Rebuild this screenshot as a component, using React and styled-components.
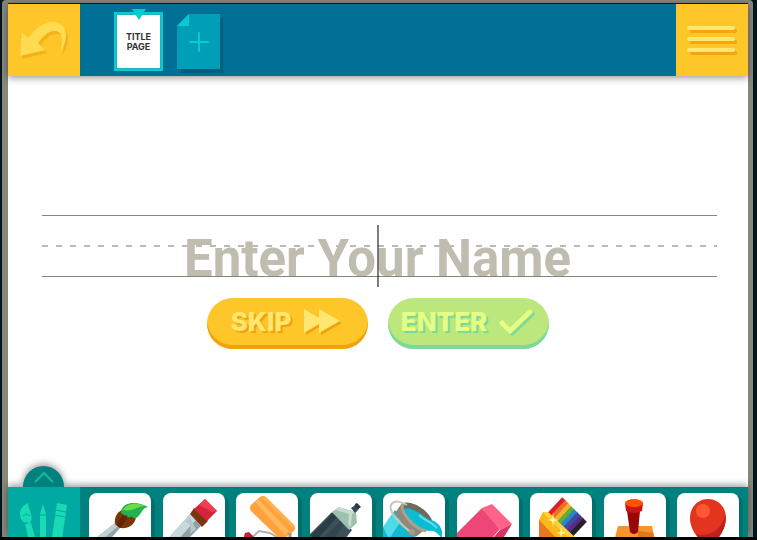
import React, { useState } from 'react'
import styled, { createGlobalStyle } from 'styled-components'

const GlobalStyle = createGlobalStyle`
  * { box-sizing: border-box; }
  body {
    margin: 0;
    background: #000;
    font-family: "Liberation Sans", sans-serif;
  }
  button { border: 0; padding: 0; cursor: pointer; font: inherit; }
  svg { display: block; }
`

const crayons = ['#dc1f26', '#ef6f24', '#f6b32a', '#5fae35', '#2a86c4', '#3d4ba3', '#5b2a86', '#242126']

const tools = [
  {
    name: 'Paint brush',
    art: (
      <>
        <path d="M2 49L26 30l5 5-13 15z" fill="#8fa6aa" />
        <path d="M2 49L26 30l3 3-19 17z" fill="#c0d0d3" />
        <path d="M26 31c-1-6 2-12 7-14l14 7c-1 8-8 12-16 11z" fill="#7b3509" />
        <path d="M27 32c2-2 4-8 7-10l4 3c-2 3-4 7-7 10z" fill="#5f2705" />
        <path d="M32 20c0-11 15-13 27-6-7 1-6 8-12 11-3 1-3-2-6-1-3 2-2-2-4-2-2 1-3-1-5-2z" fill="#22b153" />
        <path d="M34 17c4-7 13-8 22-4-7 0-12 6-22 4z" fill="#6bdc48" />
      </>
    ),
  },
  {
    name: 'Flat brush',
    art: (
      <>
        <path d="M2 49L27 21l11 12-18 18z" fill="#8ea2a6" />
        <path d="M2 49L27 21l6 6-22 24z" fill="#c8d9dc" />
        <path d="M22 29c5 1 7 5 5 12l6-5-7-13z" fill="#b4c8cc" />
        <path d="M27 21l4-6 14 13-6 6z" fill="#7a350d" />
        <path d="M31 16L42 6l12 12-10 10z" fill="#d6243d" />
        <path d="M36 12l6-6 12 12-5 1z" fill="#ee3f52" />
      </>
    ),
  },
  {
    name: 'Roller',
    art: (
      <>
        <path d="M13 44c4 2 7-4 10-6l11 2 10 6" fill="none" stroke="#aab0b4" strokeWidth="2" />
        <path d="M9 40l4-1 6 6-4 5-8-3z" fill="#c51f30" />
        <path d="M15 12l9-8q3-2 6 0l28 28q2 3 0 6l-9 7q-4 2-6 0L15 18q-2-3 0-6z" fill="#ffa23d" />
        <path d="M19 9l3-3 31 32-4 4z" fill="#ffb85c" />
        <path d="M29 4l29 28-1 3L26 5z" fill="#ffb14d" />
        <path d="M54 40v8" stroke="#929aa2" strokeWidth="3" />
      </>
    ),
  },
  {
    name: 'Spray paint',
    art: (
      <>
        <path d="M-2 43L22 19l20 18-13 17H-2z" fill="#3d515b" />
        <path d="M1 42l22-22 4 4L5 49z" fill="#2b3e48" />
        <path d="M13 46l19-20 4 4-16 20z" fill="#33464f" />
        <path d="M22 19l7-5 17 5 1 11-8 7z" fill="#9fc0af" />
        <path d="M26 17l3-3 17 5-4 2-1 13-3-3 1-10z" fill="#c6dcd0" />
        <path d="M41 15l3-2 2-3 4 4-2 3-3 3z" fill="#344a57" />
        <path d="M45 12l2-2 4 4-3 2z" fill="#213944" />
      </>
    ),
  },
  {
    name: 'Paint bucket',
    art: (
      <>
        <path d="M-1 36l13-19 20 27-4 8H-1z" fill="#12b9cf" />
        <path d="M0 34l10-14 8 8L6 46z" fill="#4ddbe9" />
        <path d="M12 20l7-10 31 20-16 13q-4 2-7-1z" fill="#8f897a" />
        <path d="M20 10c8-3 26 6 30 20l-5 6C36 32 20 20 20 10z" fill="#6f695e" />
        <path d="M22 15c9 0 17 7 24 12 6 0 11 4 13 11v8c-4-7-9-9-14-8C35 36 22 26 22 15z" fill="#0bbcd4" />
        <path d="M36 22c6 6 12 6 18 13" fill="none" stroke="#5bdcec" strokeWidth="2" />
        <path d="M20 11C16 18 30 35 43 38" fill="none" stroke="#a8a293" strokeWidth="3" />
        <path d="M29 40C18 32 5 19 8 12c3-6 11-3 16 0" fill="none" stroke="#c9c6b8" strokeWidth="2" />
        <circle cx="29" cy="39" r="3" fill="#a39d8e" />
      </>
    ),
  },
  {
    name: 'Eraser',
    art: (
      <>
        <path d="M0 40l25-25 18 21-14 16H0z" fill="#ed4779" />
        <path d="M25 15l10-4 20 20-12 6z" fill="#ff638a" />
        <path d="M43 37l12-6-13 21H30z" fill="#d33666" />
      </>
    ),
  },
  {
    name: 'Crayons',
    art: (
      <>
        {crayons.map((color, i) => (
          <path key={color} d={`M${19 + i * 3} ${22 + i * 3}l15-16`} stroke={color} strokeWidth="5" />
        ))}
        <path d="M9 27l4-8 6 1 28 26-5 8H9z" fill="#fbb917" />
        <path d="M9 27l24 25H9z" fill="#e87722" />
        <path d="M13 20l5-1 27 26-3 3z" fill="#ffd43a" />
        <path d="M23 20l1 6 5 1-5 1-1 6-1-6-5-1 5-1zM31 34l1 5 4 1-4 1-1 4-1-4-4-1 4-1z" fill="#fff4a0" />
      </>
    ),
  },
  {
    name: 'Stamp',
    art: (
      <>
        <path d="M14 33h34l4 19H9z" fill="#f7942b" />
        <path d="M34 38l15 2 3 12H34z" fill="#d97920" />
        <path d="M23 18h13l-2 21q-4 4-8 0z" fill="#990606" />
        <path d="M21 10h18l-1 8q-8 4-16 0z" fill="#c81515" />
        <ellipse cx="30" cy="10" rx="9" ry="4" fill="#ff5200" />
      </>
    ),
  },
  {
    name: 'Balloon',
    art: (
      <>
        <path d="M31 6c10 0 18 8 18 19 0 14-12 25-18 28C25 50 13 39 13 25 13 14 21 6 31 6z" fill="#e33420" />
        <path d="M48 22c3 15-10 29-17 31-5-3-9-7-12-12 13 4 27-5 29-19z" fill="#bd2020" />
        <circle cx="26" cy="18" r="7" fill="#ff5733" />
      </>
    ),
  },
]

function App() {
  const [name, setName] = useState('')

  return (
    <Screen>
      <GlobalStyle />
      <Frame>
        <Header>
          <CornerButton aria-label="Go back">
            <svg width="72" height="72" viewBox="0 0 72 72">
              <path d="M16 31l6 6C30 27 38 20 48 21c13 1 16 16 6 31 3-9 4-20-4-22-8-1-13 6-18 12l7 7-25 6z" fill="#f5b11b" />
              <path d="M14 28l6 6C28 24 36 17 46 18c13 1 16 16 6 31 3-9 4-20-4-22-8-1-13 6-18 12l7 7-25 6z" fill="#ffdb51" />
            </svg>
          </CornerButton>
          <Pages>
            <TitlePage>
              <span>TITLE</span>
              <span>PAGE</span>
              <Marker width="14" height="11" viewBox="0 0 14 11"><path d="M0 0h14L7 11z" fill="#06cbd3" /></Marker>
            </TitlePage>
            <AddPage aria-label="Add page">
              <svg width="47" height="59" viewBox="0 0 47 59">
                <path d="M4 16h11V4h31v55H4z" fill="#005f7e" />
                <path d="M0 12L12 0h31v55H0z" fill="#009eb7" />
                <path d="M0 12L12 0v12z" fill="#06cbd3" />
                <path d="M13 28h18M22 19v18" stroke="#06cbd3" strokeWidth="2" strokeLinecap="round" />
              </svg>
            </AddPage>
          </Pages>
          <CornerButton aria-label="Menu">
            <svg width="72" height="72" viewBox="0 0 72 72" strokeWidth="4" strokeLinecap="round">
              <path d="M16 27h43M16 38h43M16 49h43" stroke="#f5a50e" />
              <path d="M13 24h44M13 35h44M13 46h44" stroke="#ffe671" />
            </svg>
          </CornerButton>
        </Header>
        <Canvas>
          <Writing>
            <NameInput aria-label="Enter Your Name" placeholder="Enter Your Name" value={name} onChange={e => setName(e.target.value)} />
            <Caret />
          </Writing>
          <Actions>
            <ActionButton $bg="#ffc629" $edge="#f2a20d" $ink="#ffe671">
              SKIP
              <svg width="40" height="28" viewBox="0 0 40 28">
                <path d="M3 3v24l15-9v9l21-12L18 3v9z" fill="#f2a20d" />
                <path d="M1 1v24l15-9v9l21-12L16 1v9z" fill="#ffe671" />
              </svg>
            </ActionButton>
            <ActionButton $bg="#bce77d" $edge="#7dd89b" $ink="#e5ff83">
              ENTER
              <svg width="36" height="28" viewBox="0 0 36 28" fill="none" strokeWidth="5" strokeLinecap="round">
                <path d="M5 17l8 8L33 6" stroke="#7dd89b" />
                <path d="M3 15l8 8L31 4" stroke="#e5ff83" />
              </svg>
            </ActionButton>
          </Actions>
        </Canvas>
        <Dock>
          <DockToggle aria-label="Hide tools">
            <svg width="20" height="12" viewBox="0 0 20 12"><path d="M1 11L10 2l9 9" fill="none" stroke="#14b9a2" strokeWidth="2" /></svg>
          </DockToggle>
          <Category aria-label="Art tools">
            <svg width="72" height="50" viewBox="0 0 72 50">
              <path d="M20 16c-9 4-10 12-5 19l7 1c4-7-1-11-2-20zM17 37l6-1 4 14h-7z" fill="#1adab5" />
              <path d="M35 17l3 10v24h-6V27z" fill="#1adab5" />
              <path d="M49 16l10 2-5 34-10-2z" fill="#1adab5" />
              <path d="M15 29l3-2 4 2M32 28h6M48 23l10 2M47 28l10 2" fill="none" stroke="#00aaa2" />
            </svg>
          </Category>
          <ToolList>
            {tools.map(tool => (
              <Tool key={tool.name} aria-label={tool.name}>
                <svg width="62" height="52" viewBox="0 0 62 52">{tool.art}</svg>
              </Tool>
            ))}
          </ToolList>
        </Dock>
      </Frame>
    </Screen>
  )
}

const Screen = styled.div`
  height: 100vh;
  padding: 0 4px 3px 2px;
  overflow: hidden;
  background: linear-gradient(#00161f, #00161f) top / 100% calc(100% - 3px) no-repeat #000;
`

const Frame = styled.div`
  display: flex;
  flex-direction: column;
  height: 100%;
  border: solid #87867a;
  border-width: 3px 5px 0 6px;
  border-radius: 4px 4px 0 0;
  background: #fff;
`

const Header = styled.header`
  display: flex;
  flex: none;
  height: 73px;
  border-top: 1px solid #00212c;
  background: #006f96;
  box-shadow: 0 2px 7px rgba(0, 0, 0, 0.4);
`

const CornerButton = styled.button`
  flex: none;
  width: 72px;
  background: #ffc629;
`

const Pages = styled.nav`
  display: flex;
  flex: 1;
  align-items: flex-start;
  gap: 14px;
  padding: 8px 34px;
`

const TitlePage = styled.button`
  position: relative;
  display: flex;
  flex-direction: column;
  align-items: center;
  justify-content: center;
  width: 49px;
  height: 59px;
  border: 2px solid #06cbd3;
  background: #fff;
  box-shadow: inset 0 0 0 1px #22b3bd;
  color: #333;
  font: 700 9px/10px Inter, sans-serif;
`

const Marker = styled.svg`
  position: absolute;
  top: -5px;
  left: 50%;
  margin-left: -7px;
`

const AddPage = styled.button`
  padding-top: 2px;
  background: none;
`

const Canvas = styled.main`
  display: flex;
  flex: 1;
  flex-direction: column;
  justify-content: center;
  gap: 21px;
  padding: 0 31px 0 34px;
`

const Writing = styled.div`
  position: relative;
  border: solid #87867a;
  border-width: 1px 0;

  &::before {
    content: '';
    position: absolute;
    top: 29px;
    left: 0;
    right: 0;
    height: 2px;
    background: repeating-linear-gradient(90deg, #bab9b3 0 6px, transparent 6px 14px);
  }
`

const NameInput = styled.input`
  position: relative;
  display: block;
  width: 100%;
  height: 60px;
  padding: 26px 4px 0 0;
  border: 0;
  outline: 0;
  background: none;
  color: #4a4a44;
  font: 700 51px/34px Roboto, sans-serif;
  text-align: center;

  &::placeholder {
    color: #bfbcb0;
    opacity: 1;
  }
`

const Caret = styled.span`
  position: absolute;
  top: 9px;
  left: 50%;
  width: 2px;
  height: 62px;
  margin-left: -3px;
  background: rgba(0, 0, 0, 0.5);
`

const Actions = styled.div`
  display: flex;
  justify-content: center;
  gap: 20px;
  padding-right: 4px;
`

const ActionButton = styled.button`
  display: flex;
  align-items: center;
  justify-content: center;
  gap: 12px;
  width: 161px;
  height: 51px;
  padding-bottom: 3px;
  border-radius: 26px;
  background: ${p => p.$bg};
  box-shadow: inset 0 -4px ${p => p.$edge};
  color: ${p => p.$ink};
  font: 800 26px/30px Inter, sans-serif;
  text-shadow: 2px 2px ${p => p.$edge};
`

const Dock = styled.footer`
  position: relative;
  display: flex;
  flex: none;
  height: 50px;
  background: #00817e;
  box-shadow: 0 -2px 7px rgba(0, 0, 0, 0.4);
`

const DockToggle = styled.button`
  position: absolute;
  left: 15px;
  bottom: 100%;
  display: flex;
  justify-content: center;
  width: 41px;
  height: 21px;
  padding-top: 5px;
  border-radius: 21px 21px 0 0;
  background: #00817e;
  box-shadow: 0 -2px 7px rgba(0, 0, 0, 0.4);
  clip-path: inset(-12px -12px 0);
`

const Category = styled.button`
  flex: none;
  width: 72px;
  background: #00aaa2;
`

const ToolList = styled.div`
  display: flex;
  flex: 1;
  justify-content: space-between;
  padding: 6px 9px 0;
  overflow: hidden;
`

const Tool = styled.button`
  flex: none;
  width: 62px;
  height: 62px;
  padding: 0;
  display: flex;
  overflow: hidden;
  border-radius: 8px;
  background: #fff;
  box-shadow: 4px 3px #00706d;
`

export default App
